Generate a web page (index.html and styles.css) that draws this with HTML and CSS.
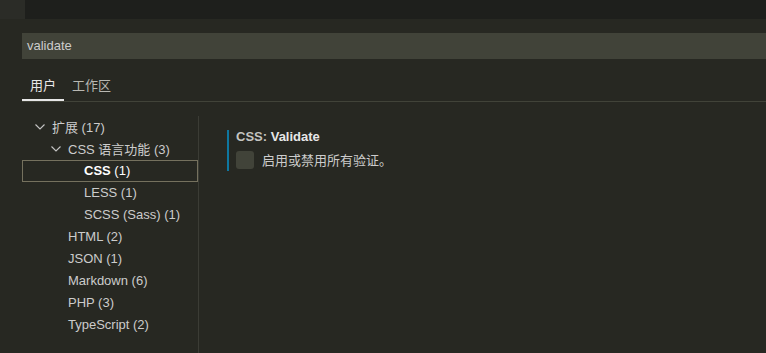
FILE: index.html
```html
<!DOCTYPE html>
<html>
<head>
  <title>Settings</title>
  <link rel="stylesheet" href="styles.css">
</head>
<body>
  <div class="titlebar">
    <div class="titlebar-tab"></div>
  </div>

  <div class="settings">
    <div class="search">validate</div>

    <div class="tabs">
      <div class="tab active">用户</div>
      <div class="tab">工作区</div>
    </div>

    <div class="body">
      <div class="tree">
        <div class="row level-0">
          <span class="twistie"><svg width="10" height="6" viewBox="0 0 10 6"><path d="M0.5 0.5 L5 5 L9.5 0.5" fill="none" stroke="#c5c5c5" stroke-width="1.1"/></svg></span>
          <span class="label">扩展 (17)</span>
        </div>
        <div class="row level-1">
          <span class="twistie"><svg width="10" height="6" viewBox="0 0 10 6"><path d="M0.5 0.5 L5 5 L9.5 0.5" fill="none" stroke="#c5c5c5" stroke-width="1.1"/></svg></span>
          <span class="label">CSS 语言功能 (3)</span>
        </div>
        <div class="row level-2 selected">
          <span class="twistie"></span>
          <span class="label"><b>CSS</b> (1)</span>
        </div>
        <div class="row level-2">
          <span class="twistie"></span>
          <span class="label">LESS (1)</span>
        </div>
        <div class="row level-2">
          <span class="twistie"></span>
          <span class="label">SCSS (Sass) (1)</span>
        </div>
        <div class="row level-1">
          <span class="twistie"></span>
          <span class="label">HTML (2)</span>
        </div>
        <div class="row level-1">
          <span class="twistie"></span>
          <span class="label">JSON (1)</span>
        </div>
        <div class="row level-1">
          <span class="twistie"></span>
          <span class="label">Markdown (6)</span>
        </div>
        <div class="row level-1">
          <span class="twistie"></span>
          <span class="label">PHP (3)</span>
        </div>
        <div class="row level-1">
          <span class="twistie"></span>
          <span class="label">TypeScript (2)</span>
        </div>
      </div>

      <div class="editor">
        <div class="setting">
          <div class="setting-title"><span class="category">CSS: </span>Validate</div>
          <div class="setting-value">
            <span class="checkbox"></span>
            <span class="description">启用或禁用所有验证。</span>
          </div>
        </div>
      </div>
    </div>
  </div>
</body>
</html>
```

FILE: styles.css
```css
body
{
  margin:0;
  background-color:#272822;
  color:#cccccc;
  font-family:"Liberation Sans", "Noto Sans CJK SC", sans-serif;
  font-size:13px;
  height:353px;
  overflow:hidden;
}

.titlebar
{
  height:19px;
  background-color:#1e1f1c;
  display:flex;
}

.titlebar-tab
{
  width:25px;
  background-color:#2b2c27;
}

.settings
{
  padding-left:22px;
}

.search
{
  margin-top:14px;
  height:26px;
  line-height:26px;
  background-color:#414339;
  padding-left:5px;
  color:#cccccc;
}

.tabs
{
  margin-top:13px;
  height:29px;
  display:flex;
  border-bottom:1px solid #414339;
}

.tab
{
  padding:0 8px;
  line-height:27px;
  color:#b8b8b2;
  border-bottom:2px solid transparent;
}

.tab.active
{
  color:#e7e7e7;
  border-bottom-color:#e7e7e7;
}

.body
{
  display:flex;
  height:252px;
}

.tree
{
  width:176px;
  margin-top:14px;
  border-right:1px solid #3b3c35;
}

.row
{
  height:22px;
  box-sizing:border-box;
  display:flex;
  align-items:center;
  border:1px solid transparent;
  padding-bottom:1px;
}

.row.selected
{
  border-color:#75715e;
  color:#ffffff;
}

.level-0 { padding-left:9px; }
.level-1 { padding-left:25px; }
.level-2 { padding-left:41px; }

.twistie
{
  width:16px;
  height:16px;
  display:flex;
  justify-content:center;
  align-items:center;
  margin-right:4px;
}

.label b
{
  font-weight:bold;
}

.editor
{
  flex:1;
  padding-left:28px;
  padding-top:28px;
}

.setting
{
  border-left:2px solid #0e77a0;
  padding-left:7px;
  height:41px;
}

.setting-title
{
  font-weight:bold;
  color:#e7e7e7;
  line-height:14px;
}

.category
{
  color:#c4c4c0;
}

.setting-value
{
  display:flex;
  align-items:center;
  margin-top:6px;
}

.checkbox
{
  width:18px;
  height:18px;
  border-radius:3px;
  background-color:#414339;
  margin-right:8px;
}

.description
{
  color:#cccccc;
}
```
